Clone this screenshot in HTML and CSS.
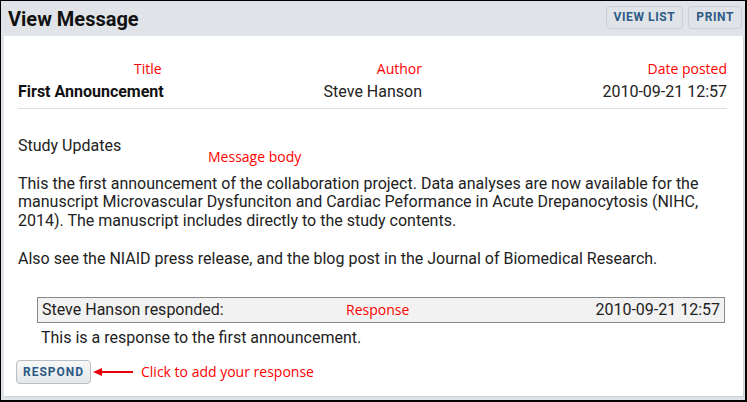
FILE: index.html
```html
<html>
    <head>
        <title>View Message</title>
        <link rel="stylesheet" href="styles.css">
    </head>

    <body>
        <div class="frame">
            <div class="header">
                <h1 class="page-title">View Message</h1>
                <div class="actions">
                    <button class="tool-btn">View List</button>
                    <button class="tool-btn">Print</button>
                </div>
            </div>

            <div class="panel">
                <div class="meta">
                    <span class="note note-title">Title</span>
                    <span class="note note-right">Author</span>
                    <span class="note note-right">Date posted</span>
                    <span class="msg-title">First Announcement</span>
                    <span class="cell-right">Steve Hanson</span>
                    <span class="cell-right">2010-09-21 12:57</span>
                </div>

                <div class="msg-body">
                    <span class="note note-body">Message body</span>
                    Study Updates<br><br>
                    This the first announcement of the collaboration project. Data analyses are now available for the manuscript Microvascular Dysfunciton and Cardiac Peformance in Acute Drepanocytosis (NIHC, 2014). The manuscript includes directly to the study contents.<br><br>
                    Also see the NIAID press release, and the blog post in the Journal of Biomedical Research.
                </div>

                <div class="response">
                    <div class="response-head">
                        <span>Steve Hanson responded:</span>
                        <span class="note">Response</span>
                        <span>2010-09-21 12:57</span>
                    </div>
                    <div class="response-text">This is a response to the first announcement.</div>
                </div>

                <div class="respond-row">
                    <button class="respond-btn">Respond</button>
                    <svg class="arrow" width="40" height="10" viewBox="0 0 40 10">
                        <line x1="6" y1="5" x2="40" y2="5" stroke="#e8000b" stroke-width="2"/>
                        <polygon points="0,5 9,1 9,9" fill="#e8000b"/>
                    </svg>
                    <span class="note">Click to add your response</span>
                </div>
            </div>
        </div>
    </body>
</html>
```

FILE: styles.css
```css
body {
    margin: 0;
    font-family: Roboto, "Liberation Sans", sans-serif;
    color: #222;
}

.frame {
    width: 747px;
    height: 402px;
    box-sizing: border-box;
    border-top: 1px solid #000;
    border-left: 1px solid #000;
    border-right: 2px solid #000;
    border-bottom: 2px solid #000;
    background-color: #e0e4e8;
    display: flex;
    flex-direction: column;
}

.header {
    height: 35px;
    display: flex;
    align-items: center;
    justify-content: space-between;
    padding: 0 3px 0 7px;
}

.page-title {
    margin: 0;
    font-size: 20px;
    font-weight: bold;
    color: #111;
}

.actions {
    display: flex;
    gap: 5px;
    margin-top: -3px;
}

.tool-btn {
    height: 23px;
    padding: 0 7px;
    border: 1px solid #c9d0d7;
    border-radius: 4px;
    background-color: #e0e4e8;
    color: #2d5b86;
    font-family: Roboto, sans-serif;
    font-size: 12px;
    font-weight: bold;
    letter-spacing: 0.6px;
    text-transform: uppercase;
}

.panel {
    flex: 1;
    margin: 0 2px 4px 3px;
    padding: 24px 8px 0 14px;
    background-color: #fff;
    box-shadow: 1px 1px 1px #ccd1d6;
}

.note {
    font-family: "Open Sans", "Noto Sans", sans-serif;
    font-size: 14px;
    color: #ff0000;
}

.meta {
    display: grid;
    grid-template-columns: 290px 114px 1fr;
    row-gap: 5px;
    margin-right: 8px;
    padding-bottom: 7px;
    border-bottom: 1px solid #dedede;
    font-size: 16px;
    line-height: 19px;
}

.meta .note {
    line-height: 17px;
}

.note-title {
    padding-left: 116px;
}

.note-right,
.cell-right {
    text-align: right;
}

.msg-title {
    font-weight: bold;
    color: #111;
}

.msg-body {
    position: relative;
    margin-top: 28px;
    font-size: 16px;
    line-height: 18.8px;
}

.note-body {
    position: absolute;
    left: 190px;
    top: 11px;
    line-height: 18px;
}

.response {
    margin: 28px 10px 0 19px;
    font-size: 16px;
}

.response-head {
    display: grid;
    grid-template-columns: 304px 1fr auto;
    align-items: center;
    height: 24px;
    padding: 0 4px;
    border: 1px solid #888;
    background-color: #f2f2f2;
}

.response-text {
    padding: 5px 4px 0 4px;
    line-height: 19px;
}

.respond-row {
    display: flex;
    align-items: center;
    margin: 13px 0 0 -2px;
}

.respond-btn {
    height: 24px;
    width: 75px;
    padding: 0;
    border: 1px solid #b9bec4;
    border-radius: 4px;
    background: linear-gradient(#f8f8f8, #e4e6e8);
    color: #2d5b86;
    font-family: Roboto, sans-serif;
    font-size: 12px;
    font-weight: bold;
    letter-spacing: 1px;
    text-transform: uppercase;
}

.arrow {
    margin: 0 8px 0 2px;
}
```
